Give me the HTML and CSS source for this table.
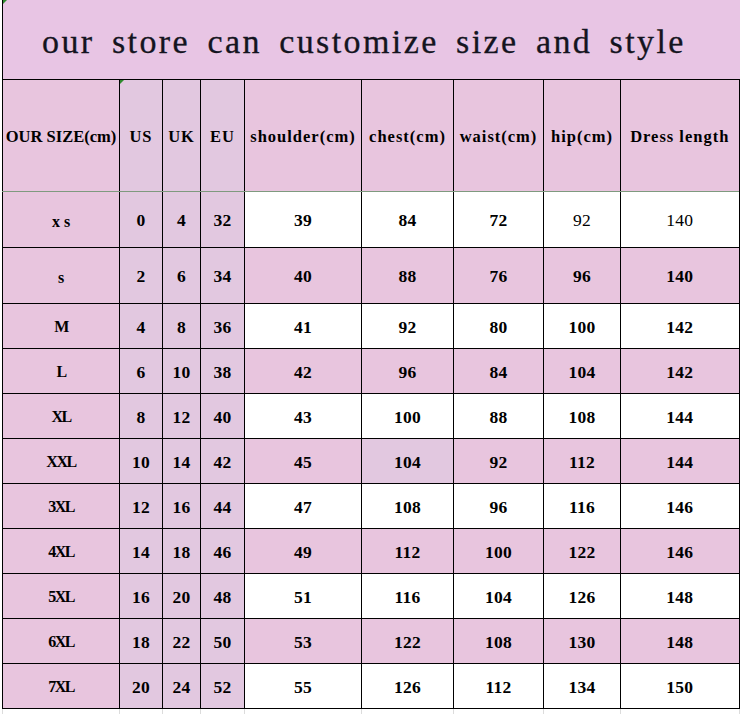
FILE: index.html
```html
<!DOCTYPE html>
<html>
<head>
<meta charset="utf-8">
<link rel="stylesheet" href="styles.css">
</head>
<body>
<table class="chart">
  <colgroup>
    <col class="c-size"><col class="c-us"><col class="c-uk"><col class="c-eu"><col class="c-sh"><col class="c-ch"><col class="c-wa"><col class="c-hip"><col class="c-len">
  </colgroup>
  <tr class="title-row">
    <td colspan="9" class="title"><span class="mark"></span>our store can customize size and style</td>
  </tr>
  <tr class="head-row">
    <td class="pink tight">OUR SIZE(cm)</td>
    <td class="lav"><span class="mark"></span>US</td>
    <td class="lav">UK</td>
    <td class="lav">EU</td>
    <td class="pink">shoulder(cm)</td>
    <td class="pink">chest(cm)</td>
    <td class="pink">waist(cm)</td>
    <td class="pink">hip(cm)</td>
    <td class="pink">Dress length</td>
  </tr>
  <tr class="white-row tall">
    <td class="pink label spaced">xs</td><td class="lav">0</td><td class="lav">4</td><td class="lav">32</td>
    <td>39</td><td>84</td><td>72</td><td class="light">92</td><td class="light">140</td>
  </tr>
  <tr class="pink-row tall">
    <td class="pink label spaced">s</td><td class="lav">2</td><td class="lav">6</td><td class="lav">34</td>
    <td>40</td><td>88</td><td>76</td><td>96</td><td>140</td>
  </tr>
  <tr class="white-row">
    <td class="pink label">M</td><td class="lav">4</td><td class="lav">8</td><td class="lav">36</td>
    <td>41</td><td>92</td><td>80</td><td>100</td><td>142</td>
  </tr>
  <tr class="pink-row">
    <td class="pink label">L</td><td class="lav">6</td><td class="lav">10</td><td class="lav">38</td>
    <td>42</td><td>96</td><td>84</td><td>104</td><td>142</td>
  </tr>
  <tr class="white-row">
    <td class="pink label">XL</td><td class="lav">8</td><td class="lav">12</td><td class="lav">40</td>
    <td>43</td><td>100</td><td>88</td><td>108</td><td>144</td>
  </tr>
  <tr class="pink-row">
    <td class="pink label">XXL</td><td class="lav">10</td><td class="lav">14</td><td class="lav">42</td>
    <td>45</td><td class="lav">104</td><td>92</td><td>112</td><td>144</td>
  </tr>
  <tr class="white-row">
    <td class="pink label">3XL</td><td class="lav">12</td><td class="lav">16</td><td class="lav">44</td>
    <td>47</td><td>108</td><td>96</td><td>116</td><td>146</td>
  </tr>
  <tr class="pink-row">
    <td class="pink label">4XL</td><td class="lav">14</td><td class="lav">18</td><td class="lav">46</td>
    <td>49</td><td>112</td><td>100</td><td>122</td><td>146</td>
  </tr>
  <tr class="white-row">
    <td class="pink label">5XL</td><td class="lav">16</td><td class="lav">20</td><td class="lav">48</td>
    <td>51</td><td>116</td><td>104</td><td>126</td><td>148</td>
  </tr>
  <tr class="pink-row">
    <td class="pink label">6XL</td><td class="lav">18</td><td class="lav">22</td><td class="lav">50</td>
    <td>53</td><td>122</td><td>108</td><td>130</td><td>148</td>
  </tr>
  <tr class="white-row">
    <td class="pink label">7XL</td><td class="lav">20</td><td class="lav">24</td><td class="lav">52</td>
    <td>55</td><td>126</td><td>112</td><td>134</td><td>150</td>
  </tr>
  <tr class="tail">
    <td></td><td></td><td></td><td></td><td></td><td></td><td></td><td></td><td></td>
  </tr>
</table>
</body>
</html>
```
FILE: styles.css
```css
html, body {
  margin: 0;
  padding: 0;
  background: #ffffff;
}

.chart {
  margin-left: 2px;
  border-collapse: collapse;
  table-layout: fixed;
  width: 737px;
  font-family: "Liberation Serif", "Times New Roman", serif;
  color: #000;
}

.c-size { width: 117px; }
.c-us { width: 43px; }
.c-uk { width: 38px; }
.c-eu { width: 44px; }
.c-sh { width: 117px; }
.c-ch { width: 92px; }
.c-wa { width: 90px; }
.c-hip { width: 77px; }
.c-len { width: 119px; }

.chart td {
  border: 1px solid #000;
  padding: 3px 0 0 0;
  text-align: center;
  vertical-align: middle;
  white-space: nowrap;
  font-size: 17.5px;
  font-weight: bold;
  letter-spacing: 0.2px;
  position: relative;
}

.chart td:last-child {
  border-right-width: 2px;
}

.title-row { height: 79px; }

.chart .title {
  background: #e8c5e4;
  border-top: none;
  border-right: none;
  font-size: 34px;
  font-weight: normal;
  text-align: left;
  padding: 6px 0 0 39px;
  color: #141420;
  letter-spacing: 2.4px;
  word-spacing: 6.5px;
  -webkit-text-stroke: 0.3px #141420;
}

.head-row { height: 112px; }
.head-row td {
  border-bottom-color: #7f9a7f;
  font-size: 16.5px;
  letter-spacing: 1px;
  padding-top: 4px;
}
.chart .head-row td.tight { letter-spacing: 0; }

.white-row, .pink-row { height: 45px; }
.white-row.tall, .pink-row.tall { height: 56px; }

.pink-row td { background: #e8c5de; }
.white-row td { background: #ffffff; }

.chart td.pink { background: #e8c5de; }
.chart td.lav { background: #e2c8e0; }

.chart td.light { font-weight: normal; }

.chart td.label { font-size: 16px; letter-spacing: -1.5px; }
.chart td.spaced { letter-spacing: 4px; padding-left: 4px; padding-top: 5px; }

.tail { height: 20px; }
.chart .tail td {
  background: #fff;
  border-top: none;
  border-bottom: none;
  border-left: 1px solid #dcdcdc;
  border-right: 1px solid #dcdcdc;
}

.mark {
  position: absolute;
  left: 0;
  top: 0;
  width: 0;
  height: 0;
  border-top: 4px solid #2e8b2e;
  border-right: 4px solid transparent;
}
```
